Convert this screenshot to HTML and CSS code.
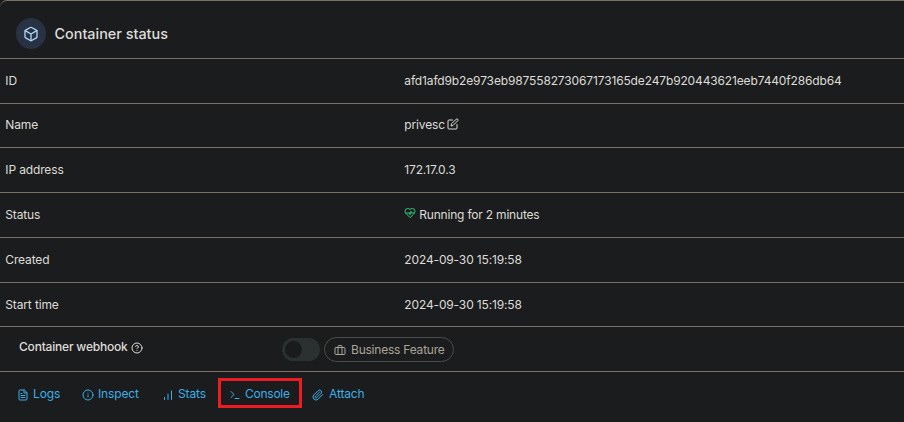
FILE: index.html
```html
<!DOCTYPE html>
<html lang="en">
<head>
<meta charset="utf-8">
<title>Container status</title>
<link rel="stylesheet" href="styles.css">
</head>
<body>
<section class="widget">
  <header class="widget-header">
    <span class="badge"><svg class="icon box" viewBox="0 0 24 24"><path d="M21 16V8a2 2 0 0 0-1-1.73l-7-4a2 2 0 0 0-2 0l-7 4A2 2 0 0 0 3 8v8a2 2 0 0 0 1 1.73l7 4a2 2 0 0 0 2 0l7-4A2 2 0 0 0 21 16z"/><path d="M3.3 7 12 12l8.700-5M12 22V12"/></svg></span>
    <h1 class="title">Container status</h1>
  </header>
  <dl class="details">
    <div class="row"><dt>ID</dt><dd class="hash">afd1afd9b2e973eb987558273067173165de247b920443621eeb7440f286db64</dd></div>
    <div class="row short name-row"><dt>Name</dt><dd><span class="name">privesc</span><svg class="icon edit" viewBox="0 0 24 24"><path d="M11 4H4a2 2 0 0 0-2 2v14a2 2 0 0 0 2 2h14a2 2 0 0 0 2-2v-7"/><path d="M18.500 2.500a2.121 2.121 0 0 1 3 3L12 15l-4 1 1-4z"/></svg></dd></div>
    <div class="row"><dt>IP address</dt><dd class="ip">172.17.0.3</dd></div>
    <div class="row"><dt>Status</dt><dd><svg class="icon heart" viewBox="0 0 24 24"><path d="M19 14c1.490-1.460 3-3.210 3-5.500A5.500 5.500 0 0 0 16.500 3c-1.760 0-3 .5-4.500 2-1.500-1.500-2.740-2-4.500-2A5.500 5.500 0 0 0 2 8.500c0 2.300 1.500 4.050 3 5.500l7 7z"/><path d="M3.220 12H9.500l.5-1 2 4.500 2-7 1.500 3.500h5.270"/></svg><span class="running">Running for 2 minutes</span></dd></div>
    <div class="row"><dt>Created</dt><dd class="date">2024-09-30 15:19:58</dd></div>
    <div class="row short"><dt>Start time</dt><dd class="date">2024-09-30 15:19:58</dd></div>
  </dl>
  <div class="webhook">
    <div class="webhook-label"><span class="webhook-text">Container webhook</span><svg class="icon help" viewBox="0 0 24 24"><circle cx="12" cy="12" r="10"/><path d="M9.090 9a3 3 0 0 1 5.830 1c0 2-3 3-3 3M12 17h.01"/></svg></div>
    <span class="switch"><span class="knob"></span></span>
    <span class="feature"><svg class="icon case" viewBox="0 0 24 24"><rect x="2" y="7" width="20" height="14" rx="2"/><path d="M16 21V5a2 2 0 0 0-2-2h-4a2 2 0 0 0-2 2v16"/></svg><span class="feature-text">Business Feature</span></span>
  </div>
  <nav class="links">
    <a class="link logs"><svg class="icon" viewBox="0 0 24 24"><path d="M14 2H6a2 2 0 0 0-2 2v16a2 2 0 0 0 2 2h12a2 2 0 0 0 2-2V8zM14 2v6h6M16 13H8M16 17H8M10 9H8"/></svg><span>Logs</span></a>
    <a class="link inspect"><svg class="icon" viewBox="0 0 24 24"><circle cx="12" cy="12" r="10"/><path d="M12 16v-4M12 8h.01"/></svg><span>Inspect</span></a>
    <a class="link stats"><svg class="icon" viewBox="0 0 24 24"><path d="M19 21V4M12 21V10M5 21v-4"/></svg><span>Stats</span></a>
    <a class="link console"><svg class="icon" viewBox="0 0 24 24"><path d="m4 17 6-6-6-6M12 19h8"/></svg><span>Console</span></a>
    <a class="link attach"><svg class="icon" viewBox="0 0 24 24"><path d="m21.440 11.050-9.190 9.190a6 6 0 0 1-8.490-8.490l8.570-8.570A4 4 0 1 1 18 8.840l-8.590 8.570a2 2 0 0 1-2.830-2.830l8.490-8.480"/></svg><span>Attach</span></a>
  </nav>
</section>
</body>
</html>
```
FILE: styles.css
```css
* { box-sizing: border-box; }

body {
  margin: 0;
  height: 422px;
  overflow: hidden;
  background: #1b1c1d;
  color: #dedcd8;
  font: 12px/18px Inter, "Liberation Sans", sans-serif;
  letter-spacing: -0.140px;
  white-space: nowrap;
}

.widget {
  height: 440px;
  margin-right: -10px;
  border: solid #7b7166;
  border-width: 1px 0 0;
  border-top-left-radius: 7px;
}

.icon {
  flex: none;
  width: 12px;
  height: 12px;
  fill: none;
  stroke: currentColor;
  stroke-width: 2;
  stroke-linecap: round;
  stroke-linejoin: round;
}

.widget-header {
  display: flex;
  align-items: center;
  height: 58px;
  padding: 7px 0 0 16px;
  border-bottom: 1px solid #7b7166;
}

.badge {
  display: grid;
  place-items: center;
  width: 30px;
  height: 31px;
  border-radius: 50%;
  background: #293242;
  color: #a9d8f8;
}

.box { width: 16px; height: 16px; margin-top: 1px; }

.title {
  margin: 1px 0 0 8.500px;
  font-size: 14.400px;
  font-weight: 500;
  letter-spacing: 0;
}

.details { margin: 0; }

.row {
  display: flex;
  align-items: center;
  height: 45px;
  padding-left: 5.300px;
  border-bottom: 1px solid #7b7166;
}

.short { height: 44px; }
.name-row { padding-bottom: 1px; }
.row dt { width: 399px; }
.row dd { display: flex; align-items: center; margin: 0; }
.edit { margin: -2px 0 0 2px; }
.heart { margin: -4px 3px 0 0; color: #2fc77d; }
.running { letter-spacing: -0.200px; }

.webhook {
  display: flex;
  align-items: center;
  height: 45px;
  padding-left: 19px;
  border-bottom: 1px solid #7b7166;
}

.webhook-label {
  display: flex;
  align-items: center;
  width: 263px;
  margin-top: -4px;
  font-weight: 500;
  letter-spacing: -0.200px;
}

.help { margin: 2px 0 0 3px; }

.switch {
  width: 38px;
  height: 23px;
  padding: 3px;
  border-radius: 12px;
  background: #2b3130;
}

.knob {
  display: block;
  width: 17px;
  height: 17px;
  border-radius: 50%;
  background: #191b1c;
}

.feature {
  display: flex;
  align-items: center;
  width: 130px;
  height: 25px;
  margin-left: 4px;
  padding: 1px 0 0 9px;
  border: 1px solid #4b4b4a;
  border-radius: 13px;
  color: #aaa498;
}

.feature-text { margin-left: 5px; letter-spacing: -0.220px; }

.links {
  display: flex;
  align-items: center;
  height: 43px;
  padding-left: 17px;
  color: #3caee6;
}

.link { display: flex; align-items: center; gap: 4px; }
.logs { width: 65px; }
.inspect { width: 80px; }
.stats { width: 56px; }
.link .icon { margin-top: 2px; }

.console {
  width: 84px;
  height: 30px;
  margin: 0 10px 2px 0;
  padding: 2px 0 0 8px;
  border: 3px solid #ed1c24;
  letter-spacing: -0.250px;
}

.attach { gap: 5px; }
```
